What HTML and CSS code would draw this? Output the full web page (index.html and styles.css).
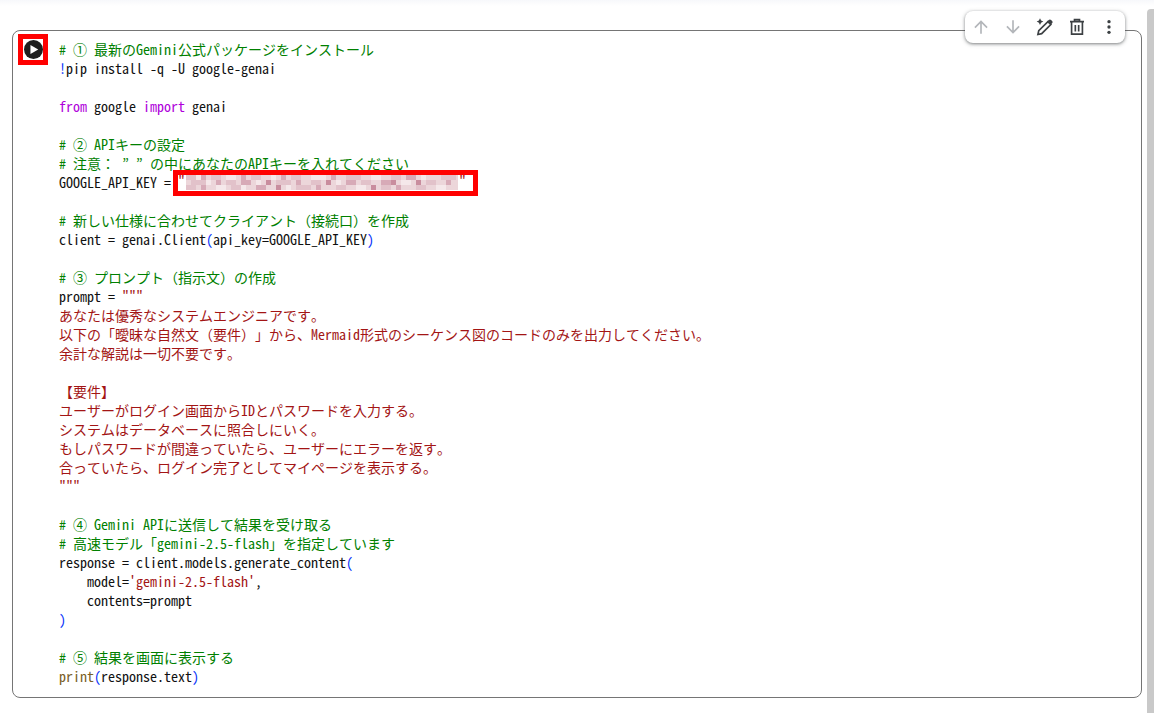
FILE: index.html
```html
<!DOCTYPE html>
<html lang="ja">
<head>
<meta charset="utf-8">
<title>Notebook cell</title>
<link rel="stylesheet" href="styles.css">
</head>
<body>
<div class="page">
  <div class="cell">
    <div class="toolbar">
      <span class="slot"><svg class="tool" viewBox="0 0 24 24"><path class="dim" d="M4 12l1.410 1.410L11 7.830V20h2V7.830l5.580 5.590L20 12l-8-8-8 8z"/></svg></span>
      <span class="slot"><svg class="tool" viewBox="0 0 24 24"><path class="dim" d="M20 12l-1.410-1.410L13 16.170V4h-2v12.170l-5.580-5.590L4 12l8 8 8-8z"/></svg></span>
      <span class="slot"><svg class="tool" viewBox="0 0 24 24"><path class="line" d="M3.500 21l1-4.500L15.500 5.500 19 9 8 20z"/><path class="solid" d="M14.500 5.500l2-2c.8-.8 2-.8 2.800 0l1.200 1.200c.8.8.8 2 0 2.800l-2 2z"/><path class="solid" d="M6 1.500l1.300 2.700L10 5.500 7.300 6.800 6 9.500 4.700 6.800 2 5.500l2.700-1.300z"/></svg></span>
      <span class="slot"><svg class="tool" viewBox="0 0 24 24"><path class="line" d="M3.600 5.500h16.800M9 5V3.200h6V5M5.500 6v14.500h13V6M10 9.500v8M14 9.500v8"/></svg></span>
      <span class="slot"><svg class="tool" viewBox="0 0 24 24"><circle class="solid" cx="12" cy="5.600" r="2"/><circle class="solid" cx="12" cy="12" r="2"/><circle class="solid" cx="12" cy="18.400" r="2"/></svg></span>
    </div>
    <div class="run-frame">
      <svg class="run" viewBox="0 0 20 20"><circle cx="10" cy="10" r="10" fill="#1f1f1f"/><path d="M6.800 5.200v9.600L15 10z" fill="#fff"/></svg>
    </div>
    <pre class="code"><span class="c"># ① 最新のGemini公式パッケージをインストール</span>
<span class="b">!</span>pip install -q -U google-genai

<span class="k">from</span> google <span class="k">import</span> genai

<span class="c"># ② APIキーの設定</span>
<span class="c"># 注意：<span class="fw fw-r">”</span> <span class="fw">”</span>の中にあなたのAPIキーを入れてください</span>
GOOGLE_API_KEY = <span class="key-wrap"><span class="s q1">"</span><svg class="mosaic" viewBox="0 0 272 15" preserveAspectRatio="none"><rect width="272" height="15" fill="#ecd6da"/><path fill="#f5e8ea" d="M10 0h5v5h-5zM40 0h10v5h-10zM85 0h5v5h-5zM125 0h15v5h-15zM185 0h10v5h-10zM235 0h5v5h-5zM20 5h5v5h-5zM70 5h5v5h-5zM150 5h5v5h-5zM215 5h10v5h-10zM30 10h10v5h-10zM100 10h5v5h-5zM170 10h10v5h-10zM250 10h10v5h-10zM55 10h5v5h-5z"/><path fill="#e2c2ca" d="M0 0h10v5h-10zM25 0h10v5h-10zM65 0h10v5h-10zM105 0h10v5h-10zM160 0h15v5h-15zM205 0h10v5h-10zM255 0h15v5h-15zM5 5h15v5h-15zM40 5h10v5h-10zM90 5h15v5h-15zM125 5h10v5h-10zM175 5h10v5h-10zM240 5h10v5h-10zM0 10h10v5h-10zM45 10h10v5h-10zM110 10h15v5h-15zM150 10h10v5h-10zM195 10h10v5h-10zM230 10h10v5h-10z"/><path fill="#d7aab7" d="M15 0h5v5h-5zM55 0h5v5h-5zM95 0h5v5h-5zM145 0h5v5h-5zM220 0h10v5h-10zM30 5h5v5h-5zM55 5h10v5h-10zM110 5h5v5h-5zM160 5h10v5h-10zM195 5h10v5h-10zM260 5h5v5h-5zM15 10h5v5h-5zM70 10h10v5h-10zM130 10h5v5h-5zM210 10h5v5h-5z"/><path fill="#c98d9e" d="M80 5h5v5h-5zM140 5h5v5h-5zM205 5h5v5h-5zM230 5h5v5h-5zM90 10h5v5h-5zM185 10h5v5h-5z"/></svg><span class="s q2">"</span></span>

<span class="c"># 新しい仕様に合わせてクライアント（接続口）を作成</span>
client = genai.Client<span class="b">(</span>api_key=GOOGLE_API_KEY<span class="b">)</span>

<span class="c"># ③ プロンプト（指示文）の作成</span>
prompt = <span class="s">"""</span>
<span class="s">あなたは優秀なシステムエンジニアです。</span>
<span class="s">以下の「曖昧な自然文（要件）」から、Mermaid形式のシーケンス図のコードのみを出力してください。</span>
<span class="s">余計な解説は一切不要です。</span>

<span class="s">【要件】</span>
<span class="s">ユーザーがログイン画面からIDとパスワードを入力する。</span>
<span class="s">システムはデータベースに照合しにいく。</span>
<span class="s">もしパスワードが間違っていたら、ユーザーにエラーを返す。</span>
<span class="s">合っていたら、ログイン完了としてマイページを表示する。</span>
<span class="s">"""</span>

<span class="c"># ④ Gemini APIに送信して結果を受け取る</span>
<span class="c"># 高速モデル「gemini-2.5-flash」を指定しています</span>
response = client.models.generate_content<span class="b">(</span>
    model=<span class="s">'gemini-2.5-flash'</span>,
    contents=prompt
<span class="b">)</span>

<span class="c"># ⑤ 結果を画面に表示する</span>
<span class="p">print</span><span class="b">(</span>response.text<span class="b">)</span></pre>
  </div>
  <div class="scrollbar"></div>
</div>
</body>
</html>
```
FILE: styles.css
```css
* { box-sizing: border-box; }
html, body { margin: 0; height: 100%; }
body { background: #fff; overflow: hidden; }
.page {
  position: relative;
  height: 713px;
  padding: 30px 12px 0;
  background: linear-gradient(#f7f8fb, #fff 6px);
}
.cell {
  position: relative;
  height: 668px;
  width: 1130px;
  background: #fff;
  border: 1px solid #757575;
  border-radius: 8px;
  padding: 9px 0 0 46px;
}
.code {
  margin: 0;
  font-family: "Noto Sans Mono CJK JP", "Noto Sans CJK JP", monospace;
  font-size: 14px;
  line-height: 19px;
  color: #111;
  text-spacing-trim: space-all;
  font-kerning: none;
}
.c { color: #008000; }
.k { color: #af00db; }
.s { color: #a31515; }
.b { color: #0431fa; }
.p { color: #795e26; }
.fw { display: inline-block; width: 14px; text-align: left; }
.fw-r { text-align: right; }
.key-wrap {
  position: absolute;
  left: 160px;
  top: 139px;
  width: 305px;
  height: 26px;
  border: 5px solid #f00;
  background: #fff;
  display: flex;
  align-items: flex-start;
  line-height: 13px;
}
.q1 { width: 8px; }
.q2 { width: 7px; margin-left: 1px; }
.mosaic { width: 272px; height: 15px; display: block; flex: none; filter: blur(.5px); }
.run-frame {
  position: absolute;
  left: 5px;
  top: 3px;
  width: 30px;
  height: 31px;
  border: 5px solid #f00;
  background: #fff;
  display: flex;
  align-items: center;
  justify-content: center;
}
.run { width: 19px; height: 19px; display: block; flex: none; }
.toolbar {
  position: absolute;
  right: 16px;
  top: -20px;
  height: 32px;
  background: #fff;
  border-radius: 8px;
  box-shadow: 0 1px 3px rgba(60,64,67,.55), 0 1px 4px 1px rgba(60,64,67,.15);
  display: flex;
  align-items: center;
}
.slot { width: 32px; height: 32px; display: flex; align-items: center; justify-content: center; }
.tool { width: 20px; height: 20px; display: block; }
.dim { fill: #b3b6ba; }
.line { fill: none; stroke: #3c4043; stroke-width: 2; }
.solid { fill: #3c4043; }
.scrollbar {
  position: absolute;
  right: 0;
  top: 9px;
  bottom: 0;
  width: 7px;
  background: #c9c9c9;
  border-radius: 4px 0 0 0;
}
```
